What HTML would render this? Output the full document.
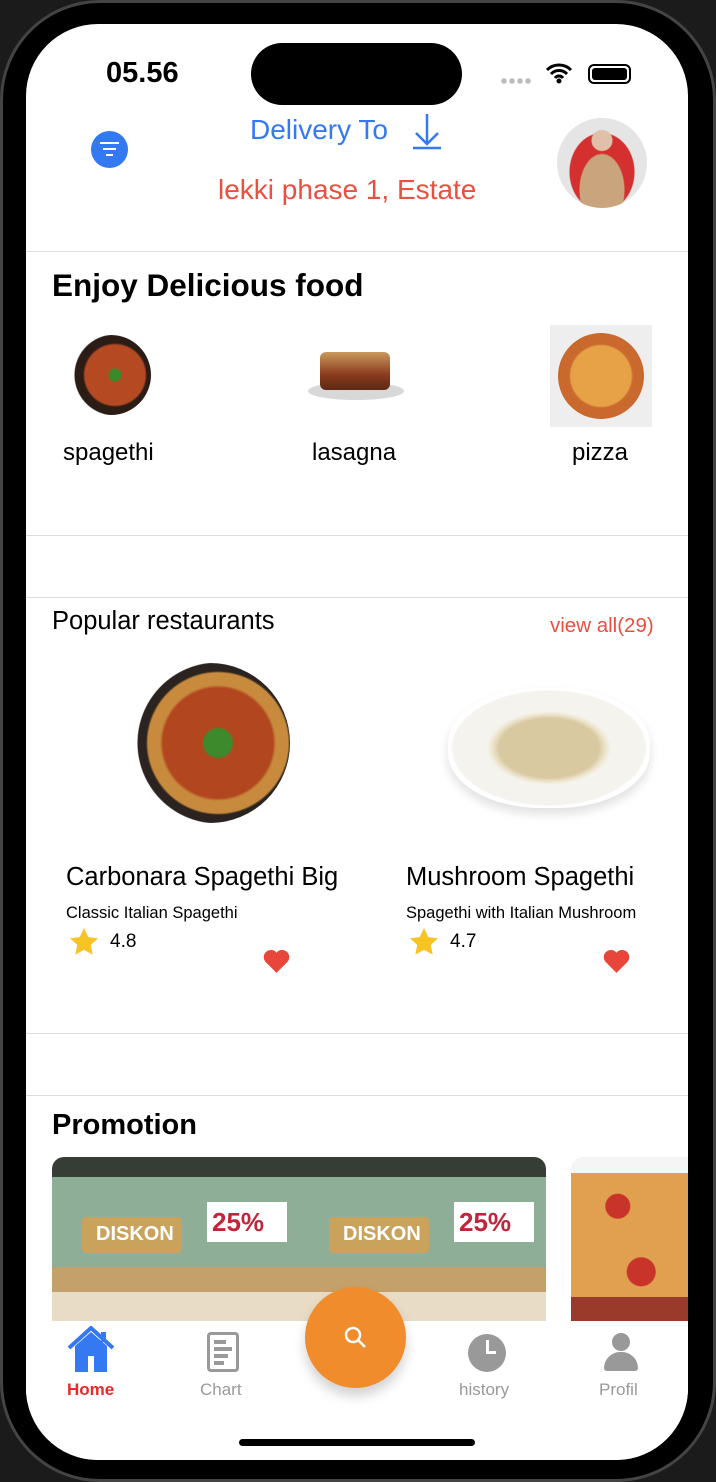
<!DOCTYPE html>
<html><head><meta charset="utf-8"><style>
*{margin:0;padding:0;box-sizing:border-box}
body{width:716px;height:1482px;background:#1b1b1b;position:relative;overflow:hidden;font-family:"Liberation Sans",sans-serif}
.a{position:absolute}
.frame{left:0;top:0;width:716px;height:1482px;border-radius:100px;background:#000;border:3px solid #444}
.screen{left:26px;top:24px;width:662px;height:1436px;border-radius:72px;background:#fff;overflow:hidden}
.line{height:1px;background:#ddd;left:0;width:662px}
</style></head><body>
<div class="a frame"></div>
<div class="a screen">
  <div class="a" style="left:80px;top:33px;font-size:29px;font-weight:bold;color:#000">05.56</div>
  <div class="a" style="left:225px;top:19px;width:211px;height:62px;border-radius:31px;background:#000"></div>
  <div class="a" style="left:474px;top:54px;width:32px;height:6px;background:radial-gradient(circle,#bbb 2.5px,transparent 3px) 0 0/8px 6px"></div>
  <svg class="a" style="left:519px;top:38px" width="28" height="22" viewBox="0 0 28 22"><path d="M2 8a17 17 0 0 1 24 0M6 12a11 11 0 0 1 16 0M10 16a5 5 0 0 1 8 0" stroke="#000" stroke-width="3" fill="none"/><circle cx="14" cy="19" r="2.5"/></svg>
  <div class="a" style="left:562px;top:40px;width:43px;height:20px;border:2px solid #000;border-radius:6px;padding:2px"><div style="background:#000;height:100%;border-radius:3px"></div></div>
  <div class="a" style="left:65px;top:107px;width:37px;height:37px;border-radius:50%;background:#3479f2">
    <div class="a" style="left:9px;top:11px;width:19px;height:2px;background:#fff"></div>
    <div class="a" style="left:12px;top:17px;width:13px;height:2px;background:#fff"></div>
    <div class="a" style="left:15px;top:23px;width:7px;height:2px;background:#fff"></div>
  </div>
  <div class="a" style="left:224px;top:90px;font-size:28px;color:#3479f2">Delivery To</div>
  <svg class="a" style="left:385px;top:88px" width="32" height="38" viewBox="0 0 32 38"><path d="M16 2v30M5 21l11 11 11-11M2 36h28" stroke="#3479f2" stroke-width="2.5" fill="none"/></svg>
  <div class="a" style="left:192px;top:150px;font-size:28px;color:#e8503f">lekki phase 1, Estate</div>
  <div class="a" style="left:531px;top:94px;width:90px;height:90px;border-radius:50%;background:radial-gradient(circle at 50% 25%,#e0c0a8 0 10px,transparent 11px),radial-gradient(ellipse at 50% 80%,#c9a47c 0 22px,transparent 23px),radial-gradient(ellipse at 50% 60%,#d43030 0 32px,#e5e5e5 33px)"></div>
  <div class="a line" style="top:227px"></div>
  <div class="a" style="left:26px;top:243px;font-size:31.5px;font-weight:bold;color:#000">Enjoy Delicious food</div>
  <div class="a" style="left:45px;top:311px;width:80px;height:80px;border-radius:50%;background:radial-gradient(circle at 55% 50%,#3a8a2a 0 6px,#b54a22 7px 30px,#2b1d16 32px 40px,transparent 41px)"></div>
  <div class="a" style="left:37px;top:415px;font-size:24px;color:#000">spagethi</div>
  <div class="a" style="left:282px;top:358px;width:96px;height:18px;border-radius:50%;background:#d8d8d8"></div>
  <div class="a" style="left:294px;top:328px;width:70px;height:38px;border-radius:6px;background:linear-gradient(#c99a5c,#8b3a1e 60%,#5a2a14)"></div>
  <div class="a" style="left:286px;top:415px;font-size:24px;color:#000">lasagna</div>
  <div class="a" style="left:524px;top:301px;width:102px;height:102px;background:#eee"></div>
  <div class="a" style="left:532px;top:309px;width:86px;height:86px;border-radius:50%;background:radial-gradient(circle,#e7a247 0 30px,#c9692d 32px 43px,transparent 44px)"></div>
  <div class="a" style="left:546px;top:415px;font-size:24px;color:#000">pizza</div>
  <div class="a line" style="top:511px"></div>
  <div class="a line" style="top:573px"></div>
  <div class="a" style="left:26px;top:583px;font-size:25.5px;color:#000">Popular restaurants</div>
  <div class="a" style="left:524px;top:590px;font-size:20.5px;color:#e8503f">view all(29)</div>
  <div class="a" style="left:104px;top:639px;width:160px;height:160px;border-radius:50%;background:radial-gradient(circle at 55% 50%,#3d8a2c 0 14px,#b2461f 16px 55px,#c88a3c 58px 70px,#2a2320 72px 80px,transparent 81px)"></div>
  <div class="a" style="left:422px;top:664px;width:202px;height:120px;border-radius:46%;background:radial-gradient(ellipse,#d8c9a0 0 50px,#ebe2c9 56px,#f5f3ee 62px 96px,transparent 98px);box-shadow:0 6px 10px rgba(0,0,0,.12)"></div>
  <div class="a" style="left:40px;top:839px;font-size:25.5px;color:#000">Carbonara Spagethi Big</div>
  <div class="a" style="left:40px;top:880px;font-size:16.5px;color:#000">Classic Italian Spagethi</div>
  <svg class="a" style="left:42px;top:902px" width="32" height="32" viewBox="0 0 24 24"><path d="M12 1.5l3.2 6.8 7.3.9-5.4 5 1.4 7.3L12 17.9l-6.5 3.6 1.4-7.3-5.4-5 7.3-.9z" fill="#f7c325"/></svg>
  <div class="a" style="left:84px;top:907px;font-size:19px;color:#000">4.8</div>
  <svg class="a" style="left:236px;top:924px" width="29" height="26" viewBox="0 0 24 22"><path d="M12 21L2.5 11.5A5.5 5.5 0 0 1 12 4a5.5 5.5 0 0 1 9.5 7.5z" fill="#e8463a"/></svg>
  <div class="a" style="left:380px;top:839px;font-size:25.5px;color:#000">Mushroom Spagethi</div>
  <div class="a" style="left:380px;top:880px;font-size:16.5px;color:#000">Spagethi with Italian Mushroom</div>
  <svg class="a" style="left:382px;top:902px" width="32" height="32" viewBox="0 0 24 24"><path d="M12 1.5l3.2 6.8 7.3.9-5.4 5 1.4 7.3L12 17.9l-6.5 3.6 1.4-7.3-5.4-5 7.3-.9z" fill="#f7c325"/></svg>
  <div class="a" style="left:424px;top:907px;font-size:19px;color:#000">4.7</div>
  <svg class="a" style="left:576px;top:924px" width="29" height="26" viewBox="0 0 24 22"><path d="M12 21L2.5 11.5A5.5 5.5 0 0 1 12 4a5.5 5.5 0 0 1 9.5 7.5z" fill="#e8463a"/></svg>
  <div class="a line" style="top:1009px"></div>
  <div class="a line" style="top:1071px"></div>
  <div class="a" style="left:26px;top:1085px;font-size:29px;font-weight:bold;color:#000">Promotion</div>
  <div class="a" style="left:26px;top:1133px;width:494px;height:164px;border-radius:12px 12px 0 0;overflow:hidden;background:linear-gradient(#363d35 0 20px,#8fae97 20px 110px,#c4a16a 110px 135px,#e8dcc6 135px)">
    <div class="a" style="left:30px;top:60px;width:100px;height:36px;background:#c9a35c;border-radius:4px"></div>
    <div class="a" style="left:155px;top:45px;width:80px;height:40px;background:#fff"></div>
    <div class="a" style="left:277px;top:60px;width:100px;height:36px;background:#c9a35c;border-radius:4px"></div>
    <div class="a" style="left:402px;top:45px;width:80px;height:40px;background:#fff"></div>
    <div class="a" style="left:44px;top:66px;font-size:20px;font-weight:bold;color:#fff">DISKON</div>
    <div class="a" style="left:160px;top:50px;font-size:26px;font-weight:bold;color:#c0263a">25%</div>
    <div class="a" style="left:291px;top:66px;font-size:20px;font-weight:bold;color:#fff">DISKON</div>
    <div class="a" style="left:407px;top:50px;font-size:26px;font-weight:bold;color:#c0263a">25%</div>
  </div>
  <div class="a" style="left:545px;top:1133px;width:117px;height:164px;border-radius:12px 0 0 0;background:radial-gradient(circle at 40% 30%,#c8342a 0 12px,transparent 13px),radial-gradient(circle at 60% 70%,#c8342a 0 14px,transparent 15px),linear-gradient(#f5f5f5 0 16px,#e0a050 16px 140px,#9a3a2a 140px)"></div>
  <div class="a" style="left:0;top:1297px;width:662px;height:139px;background:#fff"></div>
  <svg class="a" style="left:41px;top:1302px" width="48" height="46" viewBox="0 0 48 46"><path d="M2 22L24 2l22 20" stroke="#3479f2" stroke-width="4" fill="none"/><path d="M8 20v26h32V20L24 6z" fill="#3479f2"/><rect x="21" y="30" width="6" height="16" fill="#fff"/><rect x="34" y="6" width="5" height="10" fill="#3479f2"/></svg>
  <div class="a" style="left:41px;top:1356px;font-size:17px;font-weight:bold;color:#e8292a">Home</div>
  <div class="a" style="left:181px;top:1308px;width:32px;height:40px;border:3px solid #999;border-radius:4px">
    <div class="a" style="left:4px;top:5px;width:12px;height:4px;background:#999"></div>
    <div class="a" style="left:4px;top:12px;width:18px;height:4px;background:#999"></div>
    <div class="a" style="left:4px;top:19px;width:14px;height:4px;background:#999"></div>
    <div class="a" style="left:4px;top:26px;width:10px;height:4px;background:#999"></div>
  </div>
  <div class="a" style="left:174px;top:1356px;font-size:17px;color:#999">Chart</div>
  <div class="a" style="left:279px;top:1263px;width:101px;height:101px;border-radius:50%;background:#f08c2c;box-shadow:0 8px 12px rgba(0,0,0,.18)"></div>
  <svg class="a" style="left:316px;top:1300px" width="28" height="28" viewBox="0 0 28 28"><circle cx="11" cy="11" r="7" stroke="#fff" stroke-width="2.5" fill="none"/><path d="M16 16l7 7" stroke="#fff" stroke-width="2.5"/></svg>
  <div class="a" style="left:442px;top:1310px;width:38px;height:38px;border-radius:50%;background:#999"></div>
  <div class="a" style="left:460px;top:1316px;width:3px;height:14px;background:#fff"></div>
  <div class="a" style="left:460px;top:1327px;width:10px;height:3px;background:#fff"></div>
  <div class="a" style="left:433px;top:1356px;font-size:17px;color:#999">history</div>
  <div class="a" style="left:586px;top:1309px;width:18px;height:18px;border-radius:50%;background:#999"></div>
  <div class="a" style="left:578px;top:1328px;width:34px;height:19px;border-radius:17px 17px 3px 3px;background:#999"></div>
  <div class="a" style="left:573px;top:1356px;font-size:17px;color:#999">Profil</div>
  <div class="a" style="left:213px;top:1415px;width:236px;height:7px;border-radius:4px;background:#000"></div>
</div>
</body></html>
